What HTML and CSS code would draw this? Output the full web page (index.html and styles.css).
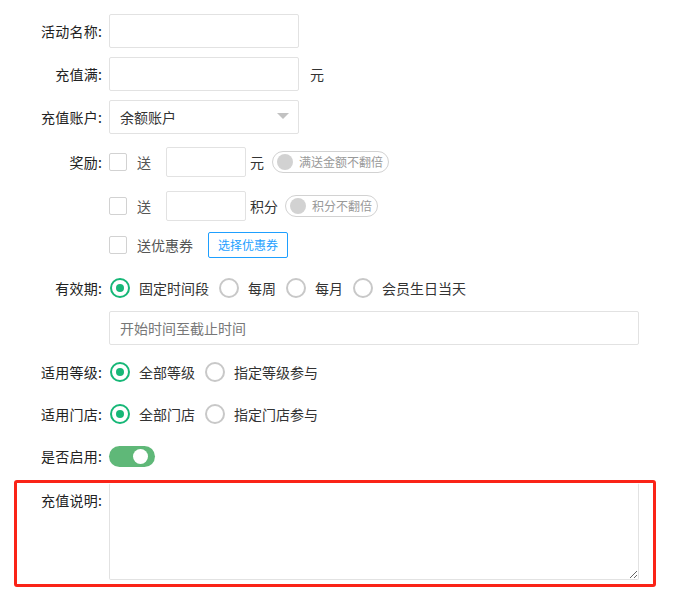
FILE: index.html
```html
<!DOCTYPE html>
<html lang="zh-CN">
<head>
<meta charset="utf-8">
<title>充值活动</title>
<link rel="stylesheet" href="styles.css">
</head>
<body>
<form class="form">
  <div class="row r-name">
    <label class="label">活动名称:</label>
    <input class="input w190" type="text">
  </div>
  <div class="row r-full">
    <label class="label">充值满:</label>
    <input class="input w190" type="text"><span class="unit">元</span>
  </div>
  <div class="row r-acct">
    <label class="label">充值账户:</label>
    <div class="select"><span>余额账户</span><span class="arrow"></span></div>
  </div>
  <div class="row r-reward">
    <label class="label">奖励:</label>
    <div class="reward-list">
      <div class="sub sub1">
        <span class="checkbox"></span><span class="ck-text">送</span>
        <input class="input small" type="text">
        <span class="unit2">元</span>
        <span class="pill"><i class="knob"></i>满送金额不翻倍</span>
      </div>
      <div class="sub sub2">
        <span class="checkbox"></span><span class="ck-text">送</span>
        <input class="input small" type="text">
        <span class="unit2">积分</span>
        <span class="pill"><i class="knob"></i>积分不翻倍</span>
      </div>
      <div class="sub sub3">
        <span class="checkbox"></span><span class="ck-text">送优惠券</span>
        <button type="button" class="btn">选择优惠券</button>
      </div>
    </div>
  </div>
  <div class="row r-valid">
    <label class="label">有效期:</label>
    <span class="radio on"></span><span class="r-text">固定时间段</span>
    <span class="radio"></span><span class="r-text">每周</span>
    <span class="radio"></span><span class="r-text">每月</span>
    <span class="radio"></span><span class="r-text">会员生日当天</span>
  </div>
  <div class="row r-date">
    <label class="label"></label>
    <input class="input w530" type="text" placeholder="开始时间至截止时间">
  </div>
  <div class="row r-level">
    <label class="label">适用等级:</label>
    <span class="radio on"></span><span class="r-text">全部等级</span>
    <span class="radio"></span><span class="r-text">指定等级参与</span>
  </div>
  <div class="row r-store">
    <label class="label">适用门店:</label>
    <span class="radio on"></span><span class="r-text">全部门店</span>
    <span class="radio"></span><span class="r-text">指定门店参与</span>
  </div>
  <div class="row r-enable">
    <label class="label">是否启用:</label>
    <span class="switch"><i class="switch-knob"></i></span>
  </div>
  <div class="row r-note">
    <label class="label note-label">充值说明:</label>
    <textarea class="textarea"></textarea>
  </div>
</form>
</body>
</html>
```
FILE: styles.css
```css
* { box-sizing: border-box; }
html, body { margin: 0; padding: 0; background: #fff; }
body {
  font-family: "Noto Sans CJK SC", "Noto Sans", sans-serif;
  font-size: 14px;
  color: #333;
  width: 678px;
  height: 594px;
  overflow: hidden;
}
.form { padding-top: 14px; margin: 0; }
.row { display: flex; align-items: center; min-height: 34px; }
.label {
  width: 109px;
  flex: none;
  padding-right: 7px;
  text-align: right;
  line-height: 34px;
  color: #222;
  height: 34px;
  letter-spacing: 0.2px;
}
.r-name, .r-full { margin-bottom: 9px; }
.r-acct { margin-bottom: 11px; }
.r-reward { align-items: flex-start; margin-bottom: 9px; }
.r-valid { margin-bottom: 6px; }
.r-date { margin-bottom: 10px; }
.r-level, .r-store { margin-bottom: 8px; }
.r-enable { margin-bottom: 7px; }

.input {
  height: 34px;
  border: 1px solid #e2e2e2;
  border-radius: 2px;
  padding: 0 10px;
  font: inherit;
  color: #333;
  background: #fff;
  outline: none;
}
.input::placeholder { color: #777; }
.w190 { width: 190px; }
.w530 { width: 530px; }
.unit { margin-left: 11px; color: #333; }

.select {
  width: 190px;
  height: 34px;
  border: 1px solid #e2e2e2;
  border-radius: 2px;
  display: flex;
  align-items: center;
  padding: 0 9px 0 10px;
  color: #333;
}
.arrow {
  margin-left: auto;
  width: 0; height: 0;
  border-left: 6px solid transparent;
  border-right: 6px solid transparent;
  border-top: 6px solid #c2c2c2;
  margin-top: -2px;
}

.reward-list { display: flex; flex-direction: column; }
.sub { display: flex; align-items: center; height: 34px; }
.sub1 { margin-bottom: 10px; }
.sub2 { margin-bottom: 5px; }
.checkbox {
  width: 18px; height: 18px;
  border: 1px solid #d2d2d2;
  border-radius: 2px;
  background: #fff;
  flex: none;
}
.ck-text { margin-left: 10px; color: #555; }
.input.small { width: 80px; height: 30px; margin-left: 15px; }
.unit2 { margin-left: 4px; color: #333; }
.pill {
  display: inline-flex;
  align-items: center;
  height: 22px;
  border: 1px solid #d2d2d2;
  border-radius: 12px;
  padding: 0 5px 0 4px;
  font-size: 12px;
  color: #999;
  margin-left: 8px;
  line-height: 20px;
}
.sub2 .pill { margin-left: 7px; }
.knob {
  width: 16px; height: 16px;
  border-radius: 50%;
  background: #d2d2d2;
  margin-right: 6px;
  flex: none;
}
.btn {
  margin-left: 15px;
  height: 26px;
  padding: 0 9px;
  border: 1px solid #1e9fff;
  border-radius: 2px;
  background: #fff;
  color: #1e9fff;
  font-family: inherit;
  font-size: 12px;
  line-height: 24px;
  cursor: pointer;
}

.radio {
  width: 20px; height: 20px;
  border: 2px solid #c8c8c8;
  border-radius: 50%;
  flex: none;
  display: flex;
  align-items: center;
  justify-content: center;
  margin-left: 1px;
}
.radio.on { border-color: #16b777; }
.radio.on::after {
  content: "";
  width: 8px; height: 8px;
  border-radius: 50%;
  background: #16b777;
}
.r-text { margin-left: 9px; margin-right: 9px; color: #333; }

.switch {
  width: 46px; height: 21px;
  border-radius: 11px;
  background: #5fb878;
  display: flex;
  align-items: center;
  justify-content: flex-end;
  padding-right: 7px;
}
.switch-knob {
  width: 15px; height: 15px;
  border-radius: 50%;
  background: #fff;
}

.r-note {
  margin-left: 14px;
  width: 642px;
  border: 3px solid #fa2317;
  border-radius: 3px;
  align-items: flex-start;
  padding-bottom: 4px;
}
.note-label { width: 92px; }
.textarea {
  width: 530px;
  height: 97px;
  border: 1px solid #e2e2e2;
  border-top-color: transparent;
  border-radius: 2px;
  font: inherit;
  padding: 6px 10px;
  outline: none;
  resize: both;
}
```
